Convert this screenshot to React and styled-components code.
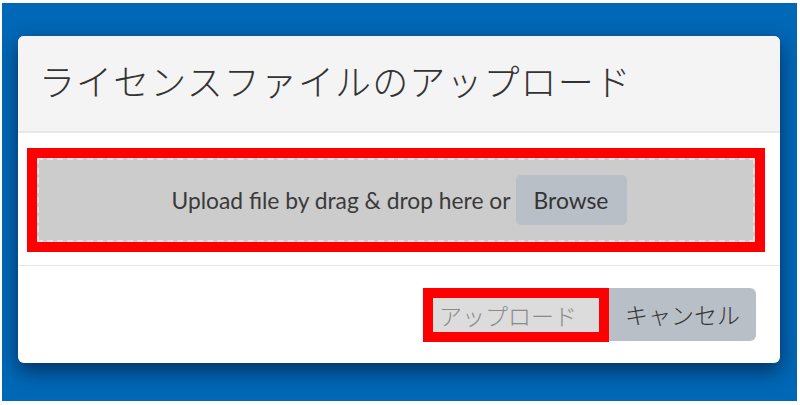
import React from "react";
import styled, { createGlobalStyle } from "styled-components";

const Global = createGlobalStyle`
  html, body { margin: 0; padding: 0; background: #ffffff; }
  * { box-sizing: border-box; }
`;

const Backdrop = styled.div`
  margin: 3px 3px 0 2px;
  height: 398px;
  background: #0068b6;
  padding: 33px 0 0 16px;
`;

const Dialog = styled.div`
  width: 762px;
  height: 327px;
  background: #ffffff;
  border-radius: 6px;
  box-shadow: 0 8px 20px rgba(0, 20, 50, 0.65);
  display: flex;
  flex-direction: column;
  overflow: hidden;
`;

const Header = styled.div`
  height: 97px;
  background: #f4f4f4;
  border-bottom: 2px solid #e8e8e8;
  display: flex;
  align-items: center;
  padding: 0 0 7px 21px;
`;

const Title = styled.h1`
  margin: 0;
  font-family: "Noto Sans CJK JP", sans-serif;
  font-weight: 300;
  font-size: 36px;
  letter-spacing: 1.1px;
  color: #333;
`;

const Body = styled.div`
  height: 133px;
  padding: 15px 15px 0 9px;
  border-bottom: 1px solid #e6e6e6;
`;

const Highlight = styled.div`
  border: 10px solid #ff0000;
  display: flex;
`;

const DropZone = styled.div`
  flex: 1;
  height: 84px;
  background: #cccccc;
  border: 2px dashed #e4e4e4;
  display: flex;
  align-items: center;
  justify-content: center;
  gap: 5px;
  padding-left: 6px;
  font-family: Lato, "Noto Sans", sans-serif;
  font-size: 22.8px;
  color: #3a3a3a;
`;

const GrayButton = styled.button`
  font-family: Lato, "Noto Sans", sans-serif;
  font-size: 22.8px;
  color: #333;
  background: #b9bfc7;
  border: none;
  border-radius: 5px;
  height: 50px;
  width: 111px;
  padding: 0;
`;

const Footer = styled.div`
  flex: 1;
  display: flex;
  justify-content: flex-end;
  align-items: flex-start;
  padding: 22px 24px 0 0;
`;

const HighlightBtn = styled.div`
  border: 10px solid #ff0000;
  display: flex;
`;

const ActionButton = styled.button`
  font-family: "Noto Sans CJK JP", sans-serif;
  font-weight: 300;
  font-size: 23px;
  border: none;
  padding: 0;
  height: ${(p) => (p.$primary ? "34px" : "53px")};
  width: ${(p) => (p.$primary ? "166px" : "147px")};
  background: ${(p) => (p.$primary ? "#dcdcdc" : "#b9bfc7")};
  color: ${(p) => (p.$primary ? "#8a8a8a" : "#333")};
  border-radius: ${(p) => (p.$primary ? "0" : "0 6px 6px 0")};
  text-align: ${(p) => (p.$primary ? "left" : "center")};
  padding-left: ${(p) => (p.$primary ? "6px" : "0")};
  line-height: 1;
`;

export default function App() {
  return (
    <>
      <Global />
      <Backdrop>
        <Dialog>
          <Header>
            <Title>ライセンスファイルのアップロード</Title>
          </Header>
          <Body>
            <Highlight>
              <DropZone>
                <span>Upload file by drag &amp; drop here or</span>
                <GrayButton>Browse</GrayButton>
              </DropZone>
            </Highlight>
          </Body>
          <Footer>
            <HighlightBtn>
              <ActionButton $primary>アップロード</ActionButton>
            </HighlightBtn>
            <ActionButton>キャンセル</ActionButton>
          </Footer>
        </Dialog>
      </Backdrop>
    </>
  );
}
